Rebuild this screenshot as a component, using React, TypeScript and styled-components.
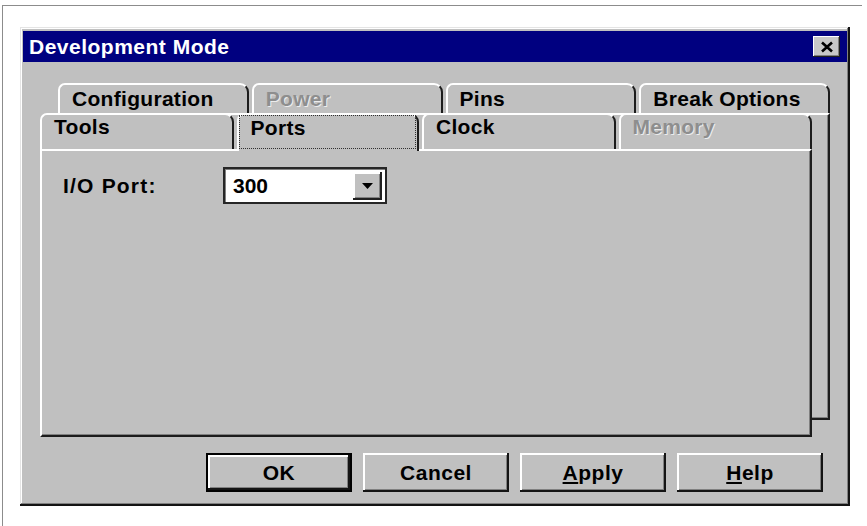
import React from "react";
import styled, { createGlobalStyle, css } from "styled-components";

const GlobalStyle = createGlobalStyle`
  html, body {
    margin: 0;
    padding: 0;
    background: #fff;
  }
  body {
    font-family: "Liberation Sans", Arial, sans-serif;
  }
`;

const Page = styled.div`
  height: 526px;
  box-sizing: border-box;
  padding: 5px 0 0 2px;
  overflow: hidden;
`;

const Frame = styled.div`
  width: 860px;
  height: 521px;
  box-sizing: border-box;
  border-top: 1px solid #8c8c8c;
  border-left: 1px solid #8c8c8c;
  padding: 21px 0 0 17px;
`;

const Dialog = styled.div`
  width: 830px;
  height: 479px;
  box-sizing: border-box;
  background: #c0c0c0;
  padding: 4px 3px 3px 3px;
  display: flex;
  flex-direction: column;
  box-shadow: inset -2px -2px #141414, inset 1px 1px #e4e4e4,
    inset -3px -3px #808080, inset 2px 2px #fff;
`;

const TitleBar = styled.div`
  height: 31px;
  flex: none;
  display: flex;
  align-items: center;
  justify-content: space-between;
  padding: 0 7px 0 6px;
  background: #000080;
  color: #fff;
  font-size: 21px;
  font-weight: bold;
  line-height: 24px;
  letter-spacing: 0.5px;
`;

const CloseButton = styled.div`
  width: 27px;
  height: 21px;
  box-sizing: border-box;
  display: flex;
  align-items: center;
  justify-content: center;
  background: #c8c8c8;
  box-shadow: inset -1px -1px #202020, inset 1px 1px #fff, inset -2px -2px #808080;
`;

const Body = styled.div`
  flex: 1;
  display: flex;
  flex-direction: column;
  padding: 21px 17px 0 17px;
`;

const TabStack = styled.div`
  display: grid;
  height: 354px;
`;

const BackSheet = styled.div`
  grid-area: 1 / 1;
  margin: 0 0 17px 18px;
  display: flex;
  flex-direction: column;
`;

const FrontSheet = styled.div`
  grid-area: 1 / 1;
  margin: 30px 18px 0 0;
  display: flex;
  flex-direction: column;
`;

const TabRow = styled.div<{ $height: number }>`
  flex: none;
  display: flex;
  gap: 3px;
  height: ${(p) => p.$height}px;
`;

const Tab = styled.div<{ $front?: boolean; $selected?: boolean }>`
  flex: 1;
  min-width: 0;
  box-sizing: border-box;
  display: flex;
  align-items: flex-start;
  background: #c0c0c0;
  border-top: 2px solid #fff;
  border-left: 2px solid #fff;
  border-right: 2px solid #1c1c1c;
  border-radius: 7px 9px 0 0;
  padding: ${(p) => (p.$front ? "0" : "2px")} 0 0 12px;
  ${(p) =>
    p.$selected &&
    css`
      position: relative;
      z-index: 1;
      margin-bottom: -2px;
      padding: 0 1px 2px 0;
    `}
`;

const TabLabel = styled.span<{ $disabled?: boolean; $focused?: boolean }>`
  font-size: 21px;
  font-weight: bold;
  line-height: 24px;
  letter-spacing: 0.3px;
  white-space: nowrap;
  color: ${(p) => (p.$disabled ? "#8e8e8e" : "#000")};
  ${(p) => p.$disabled && "text-shadow: 1px 1px #ececec;"}
  ${(p) =>
    p.$focused &&
    css`
      flex: 1;
      align-self: stretch;
      border: 1px dotted #303030;
      padding-left: 11px;
    `}
`;

const Panel = styled.div`
  flex: 1;
  box-sizing: border-box;
  background: #c0c0c0;
  border-top: 2px solid #fff;
  border-left: 2px solid #fff;
  border-right: 2px solid #1c1c1c;
  border-bottom: 2px solid #1c1c1c;
  box-shadow: inset -1px -1px #808080;
  padding: 16px 0 0 21px;
`;

const FieldRow = styled.div`
  display: flex;
  align-items: center;
`;

const FieldLabel = styled.span`
  width: 160px;
  font-size: 21px;
  font-weight: bold;
  line-height: 24px;
  letter-spacing: 1.2px;
`;

const Combo = styled.div`
  width: 164px;
  height: 37px;
  box-sizing: border-box;
  display: flex;
  align-items: center;
  justify-content: space-between;
  background: #fff;
  border: 2px solid #262626;
  box-shadow: inset 1px 1px #808080;
  padding: 0 3px 0 8px;
  font-size: 21px;
  font-weight: bold;
  line-height: 24px;
`;

const ComboArrow = styled.div`
  width: 29px;
  height: 28px;
  box-sizing: border-box;
  display: flex;
  align-items: center;
  justify-content: center;
  background: #c0c0c0;
  box-shadow: inset -2px -2px #202020, inset 2px 2px #fff, inset -3px -3px #808080;
`;

const ButtonRow = styled.div`
  display: flex;
  justify-content: flex-end;
  gap: 11px;
  margin-top: 16px;
  padding-right: 7px;
`;

const PushButton = styled.div<{ $default?: boolean }>`
  width: 146px;
  height: 39px;
  box-sizing: border-box;
  display: flex;
  align-items: center;
  justify-content: center;
  background: #c0c0c0;
  font-size: 21px;
  font-weight: bold;
  line-height: 24px;
  letter-spacing: 0.5px;
  box-shadow: inset -2px -2px #141414, inset 2px 2px #fff, inset -3px -3px #808080;
  ${(p) => p.$default && "border: 2px solid #000;"}
`;

const Mnemonic = styled.span`
  text-decoration: underline;
  text-underline-offset: 2px;
`;

const backTabs = [
  { label: "Configuration" },
  { label: "Power", disabled: true },
  { label: "Pins" },
  { label: "Break Options" },
];

const frontTabs = [
  { label: "Tools" },
  { label: "Ports", selected: true },
  { label: "Clock" },
  { label: "Memory", disabled: true },
];

export default function App() {
  return (
    <Page>
      <GlobalStyle />
      <Frame>
        <Dialog>
          <TitleBar>
            <span>Development Mode</span>
            <CloseButton>
              <svg width="14" height="12" viewBox="0 0 14 12">
                <path d="M2 1.5 L12 10.5 M12 1.5 L2 10.5" stroke="#000" strokeWidth="2.6" />
              </svg>
            </CloseButton>
          </TitleBar>
          <Body>
            <TabStack>
              <BackSheet>
                <TabRow $height={30}>
                  {backTabs.map((t) => (
                    <Tab key={t.label}>
                      <TabLabel $disabled={t.disabled}>{t.label}</TabLabel>
                    </Tab>
                  ))}
                </TabRow>
                <Panel />
              </BackSheet>
              <FrontSheet>
                <TabRow $height={36}>
                  {frontTabs.map((t) => (
                    <Tab key={t.label} $front $selected={t.selected}>
                      <TabLabel $disabled={t.disabled} $focused={t.selected}>
                        {t.label}
                      </TabLabel>
                    </Tab>
                  ))}
                </TabRow>
                <Panel>
                  <FieldRow>
                    <FieldLabel>I/O Port:</FieldLabel>
                    <Combo>
                      <span>300</span>
                      <ComboArrow>
                        <svg width="11" height="6" viewBox="0 0 11 6">
                          <polygon points="0,0 11,0 5.5,6" fill="#000" />
                        </svg>
                      </ComboArrow>
                    </Combo>
                  </FieldRow>
                </Panel>
              </FrontSheet>
            </TabStack>
            <ButtonRow>
              <PushButton $default>OK</PushButton>
              <PushButton>Cancel</PushButton>
              <PushButton>
                <Mnemonic>A</Mnemonic>pply
              </PushButton>
              <PushButton>
                <Mnemonic>H</Mnemonic>elp
              </PushButton>
            </ButtonRow>
          </Body>
        </Dialog>
      </Frame>
    </Page>
  );
}
